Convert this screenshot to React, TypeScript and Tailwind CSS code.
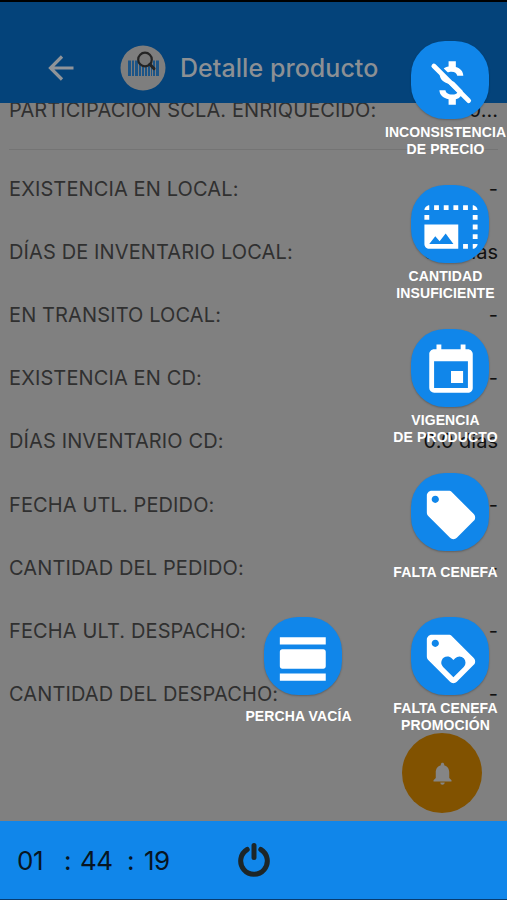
import type { ReactNode } from "react";
import {
  MdEvent,
  MdLocalOffer,
  MdLoyalty,
  MdNotifications,
  MdPhotoSizeSelectLarge,
  MdViewDay,
} from "react-icons/md";

const rows = [
  { label: "EXISTENCIA EN LOCAL:", value: "-" },
  { label: "DÍAS DE INVENTARIO LOCAL:", value: "0.0 días" },
  { label: "EN TRANSITO LOCAL:", value: "-" },
  { label: "EXISTENCIA EN CD:", value: "-" },
  { label: "DÍAS INVENTARIO CD:", value: "0.0 días" },
  { label: "FECHA UTL. PEDIDO:", value: "-" },
  { label: "CANTIDAD DEL PEDIDO:", value: "-" },
  { label: "FECHA ULT. DESPACHO:", value: "-" },
  { label: "CANTIDAD DEL DESPACHO:", value: "-" },
];

function Row({ label, value }: { label: string; value: string }) {
  return (
    <div className="flex h-[63.2px] items-center justify-between pr-[9px] pl-[9px] text-[20px] whitespace-nowrap">
      <span className="tracking-[0.12px] text-[#303030]">{label}</span>
      <span className="text-[#111111]">{value}</span>
    </div>
  );
}

function Action({ icon, lines }: { icon: ReactNode; lines: string[] }) {
  return (
    <div className="flex h-[144px] w-[124px] flex-col items-center">
      <div className="ml-[10px] flex size-[78px] shrink-0 items-center justify-center rounded-[34px] bg-[#1086ea] pt-[5px] pl-[2px] text-[58px] text-white shadow-[0_1px_2px_rgba(0,0,0,0.25)]">
        {icon}
      </div>
      <div className="ml-px flex h-[43px] flex-col items-center justify-center font-['Liberation_Sans',Arial,sans-serif] text-[14px] leading-[17px] font-bold tracking-[0.1px] whitespace-nowrap text-white">
        {lines.map((line) => (
          <span key={line}>{line}</span>
        ))}
      </div>
    </div>
  );
}

function PriceOff() {
  return (
    <svg viewBox="0 0 24 24" className="size-[58px]" fill="currentColor">
      <path d="M11 3h3v2.4c1.900.5 3 1.800 3.100 3.600h-2.500c-.3-1.100-1-1.700-2.400-1.700-.7 0-1.200.1-1.600.3L9 6c.5-.4 1.200-.6 2-.8z" />
      <path d="M7.3 8.4 9.6 9.5c.7 1 2 1.5 3.6 2l3.6 3.7c-.1 1.9-1.1 3.1-2.8 3.5V21h-3v-2.3c-2.1-.4-3.7-1.6-3.8-3.7h2.5c.2 1 1 1.8 2.8 1.8 1.2 0 2-.4 2.2-1L11.2 12.4C8.9 11.7 7.4 10.6 7.3 8.4z" />
      <path d="M4.9 5 19.3 19.300" stroke="currentColor" strokeWidth="2" strokeLinecap="round" />
    </svg>
  );
}

function Logo() {
  const bars = [
    [8, 3], [12, 2], [15, 3], [19, 2], [22, 2], [25, 2], [28, 2], [31, 1], [33, 2], [36, 3],
  ];
  return (
    <svg viewBox="0 0 46 46" className="size-[46px]">
      <circle cx="23" cy="23" r="22.5" fill="#7e7e7e" />
      {bars.map(([x, w]) => (
        <rect key={x} x={x} y="15.5" width={w} height="15.5" fill="#1d5587" />
      ))}
      <circle cx="25" cy="14.5" r="6.8" fill="#777777" stroke="#242424" strokeWidth="2.2" />
      <path d="M29.8 19.3 34 23.6" stroke="#242424" strokeWidth="3" strokeLinecap="round" />
    </svg>
  );
}

export default function App() {
  return (
    <div className="relative flex h-[900px] w-[507px] flex-col overflow-hidden bg-[#808080] font-[Inter,sans-serif]">
      <header className="flex h-[103px] shrink-0 items-center border-t-2 border-black bg-[#04437a] pt-[31px] pl-[48px]">
        <svg viewBox="0 0 26 26" className="size-[26px]" fill="none" stroke="#909499" strokeWidth="3.2">
          <path d="M25.5 13H3M14 1.5 2.5 13 14 24.5" />
        </svg>
        <div className="ml-[46px]">
          <Logo />
        </div>
        <h1 className="ml-[14px] pt-px text-[25px] font-medium tracking-[0.05px] text-[#8c9094]">Detalle producto</h1>
      </header>

      <main className="h-[718px] shrink-0 overflow-hidden">
        <div className="h-[54px] overflow-hidden">
          <div className="-mt-[25px]">
            <Row label="PARTICIPACION SCLA. ENRIQUECIDO:" value="0..." />
          </div>
        </div>
        <div className="-mt-[8px] mr-[9px] mb-[7px] ml-[9px] h-px bg-[#747474]" />
        <div className="mt-[3px]">
          {rows.map((row) => (
            <Row key={row.label} {...row} />
          ))}
        </div>
      </main>

      <footer className="flex h-[79px] shrink-0 items-center border-b border-[#073c70] bg-[#1086ea] pl-[17px] text-[26px] tracking-[-0.5px] text-[#071522]">
        <span className="w-[47px]">01</span>
        <span className="w-[16px]">:</span>
        <span className="w-[47px]">44</span>
        <span className="w-[17px]">:</span>
        <span className="w-[92px]">19</span>
        <svg viewBox="0 0 36 36" className="size-[36px]" fill="none" stroke="#1d2628" strokeWidth="5" strokeLinecap="round">
          <path d="M18 3.5v12M11.2 7.5A13.3 13.3 0 1 0 24.8 7.5" />
        </svg>
      </footer>

      <div className="absolute top-[733px] left-[402px] flex size-[80px] items-center justify-center rounded-full bg-[#815200] text-[27px] text-[#858585]">
        <MdNotifications />
      </div>

      <div className="absolute top-[41px] right-0 flex items-end">
        <div className="mr-[23px]">
          <Action icon={<MdViewDay />} lines={["PERCHA VACÍA"]} />
        </div>
        <div className="flex flex-col">
          <Action icon={<PriceOff />} lines={["INCONSISTENCIA", "DE PRECIO"]} />
          <Action icon={<MdPhotoSizeSelectLarge />} lines={["CANTIDAD", "INSUFICIENTE"]} />
          <Action icon={<MdEvent />} lines={["VIGENCIA", "DE PRODUCTO"]} />
          <Action icon={<MdLocalOffer />} lines={["FALTA CENEFA"]} />
          <Action icon={<MdLoyalty />} lines={["FALTA CENEFA", "PROMOCIÓN"]} />
        </div>
      </div>
    </div>
  );
}
